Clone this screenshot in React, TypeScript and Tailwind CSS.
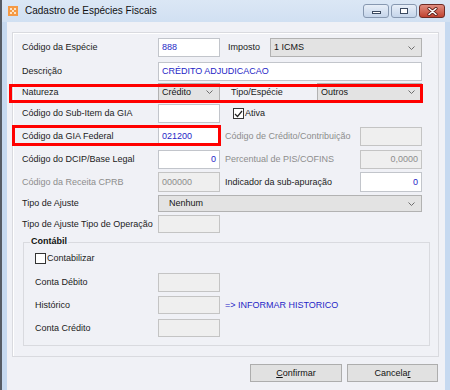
import React from "react"

// pequenos componentes do formulário
const Chevron = () => (
  <svg width="7" height="4" viewBox="0 0 7 4" className="shrink-0">
    <path d="M0.5 0.5 L3.5 3.5 L6.5 0.5" fill="none" stroke="#6d6d6d" strokeWidth="1" />
  </svg>
)

const Label = ({ children, off = false, w = "w-[136px]" }: { children: React.ReactNode; off?: boolean; w?: string }) => (
  <span className={`flex shrink-0 items-center whitespace-nowrap ${w} ${off ? "text-[#8d8d8d]" : "text-[#1b1b1b]"}`}>
    {children}
  </span>
)

const Input = ({ className = "", text = "", right = false, off = false }: { className?: string; text?: string; right?: boolean; off?: boolean }) => (
  <div
    className={`flex h-full shrink-0 items-center border px-[3px] ${
      off ? "border-[#c4c4c4] bg-[#efefef] text-[#8d8d8d]" : "border-[#c2c5cb] bg-white text-[#2626c6]"
    } ${right ? "justify-end" : ""} ${className}`}
  >
    {text}
  </div>
)

const Select = ({ className = "", text, pad = "pl-[3px]" }: { className?: string; text: string; pad?: string }) => (
  <div className={`flex h-full shrink-0 items-center justify-between border border-[#b2b2b2] bg-[#e3e3e3] pr-[6px] text-[#151515] ${pad} ${className}`}>
    <span>{text}</span>
    <Chevron />
  </div>
)

const Check = ({ checked = false }: { checked?: boolean }) => (
  <span className="flex h-[11px] w-[11px] shrink-0 items-center justify-center border border-[#333] bg-white">
    {checked && (
      <svg width="9" height="8" viewBox="0 0 9 8">
        <path d="M1 4 L3.5 6.5 L8 1" fill="none" stroke="#222" strokeWidth="1.2" />
      </svg>
    )}
  </span>
)

const WinButton = ({ kind }: { kind: "min" | "max" | "close" }) => (
  <div
    className={`flex h-[14px] w-[26px] items-center justify-center rounded-[3px] border ${
      kind === "close"
        ? "border-[#6e2b24] bg-gradient-to-b from-[#e08d80] to-[#c0412f]"
        : "border-[#8798b0] bg-gradient-to-b from-[#e8eff8] to-[#c5d5ea]"
    }`}
  >
    {kind === "min" && <span className="mt-[3px] h-[3px] w-[9px] border border-[#3b4a60] bg-white" />}
    {kind === "max" && <span className="h-[6px] w-[8px] border border-[#3b4a60] bg-white" />}
    {kind === "close" && (
      <svg width="11" height="9" viewBox="0 0 11 9">
        <path d="M2 1.5 L9 7.5 M9 1.5 L2 7.5" stroke="#5a1f18" strokeWidth="3.2" strokeLinecap="round" />
        <path d="M2 1.5 L9 7.5 M9 1.5 L2 7.5" stroke="#fff" strokeWidth="1.6" strokeLinecap="round" />
      </svg>
    )}
  </div>
)

const App = () => {
  return (
    <div className="flex h-[390px] w-[450px] flex-col overflow-hidden border-l-2 border-[#565c65] bg-[#c6d9f0] font-['Liberation_Sans',Arial,sans-serif] text-[9px] leading-none">
      {/* TITULO */}
      <div className="flex h-[22px] shrink-0 items-center bg-gradient-to-b from-[#dbe7f5] to-[#d1e0f2] pl-[6px] pr-[5px]">
        <svg width="10" height="10" viewBox="0 0 10 10" className="shrink-0">
          <rect width="10" height="10" fill="#f59a45" />
          <path d="M2 2h2v2h-2zM6 2h2v2h-2zM4 4h2v2h-2zM2 6h2v2h-2zM6 6h2v2h-2z" fill="#fde3c6" />
        </svg>
        <span className="ml-[7px] text-[10px] text-[#111]">Cadastro de Espécies Fiscais</span>
        <div className="ml-auto flex gap-[2px]">
          <WinButton kind="min" />
          <WinButton kind="max" />
          <WinButton kind="close" />
        </div>
      </div>

      {/* CORPO */}
      <div className="flex flex-1 px-[5px]">
        <div className="flex flex-1 flex-col bg-[#f0f1f6] pl-[5px] pr-[6px] pt-[10px]">
          {/* PAINEL */}
          <div className="relative border border-[#d9dadf] pb-[10px] pl-[9px] pr-[8px] pt-[5px] shadow-[inset_1px_1px_0_#ffffff]">
            <div className="flex h-[19px]">
              <Label>Código da Espécie</Label>
              <Input className="w-[62px]" text="888" />
              <Label w="ml-[8px] w-[42px]">Imposto</Label>
              <Select className="w-[152px]" text="1 ICMS" />
            </div>

            <div className="mt-[5px] flex h-[19px]">
              <Label>Descrição</Label>
              <Input className="w-[264px]" text="CRÉDITO ADJUDICACAO" />
            </div>

            <div className="mt-[2px] flex h-[18px]">
              <Label>Natureza</Label>
              <Select className="w-[62px]" text="Crédito" />
              <Label w="ml-[11px] w-[86px]">Tipo/Espécie</Label>
              <Select className="w-[105px]" text="Outros" />
            </div>

            <div className="mt-[3px] flex h-[19px]">
              <Label>Código do Sub-Item da GIA</Label>
              <Input className="w-[62px]" />
              <div className="ml-[13px] flex items-center gap-[1px] text-[#1b1b1b]">
                <Check checked />
                <span>Ativa</span>
              </div>
            </div>

            <div className="mt-[4px] flex h-[19px]">
              <Label>Código da GIA Federal</Label>
              <Input className="w-[62px]" text="021200" />
              <Label off w="ml-[5px] w-[135px]">Código de Crédito/Contribuição</Label>
              <Input off className="w-[62px]" />
            </div>

            <div className="mt-[4px] flex h-[19px]">
              <Label>Código do DCIP/Base Legal</Label>
              <Input className="w-[62px]" text="0" right />
              <Label off w="ml-[5px] w-[135px]">Percentual de PIS/COFINS</Label>
              <Input off className="w-[62px]" text="0,0000" right />
            </div>

            <div className="mt-[3px] flex h-[20px]">
              <Label off>Código da Receita CPRB</Label>
              <Input off className="w-[62px]" text="000000" />
              <Label w="ml-[5px] w-[135px]">Indicador da sub-apuração</Label>
              <Input className="w-[62px]" text="0" right />
            </div>

            <div className="mt-[3px] flex h-[17px]">
              <Label>Tipo de Ajuste</Label>
              <Select className="w-[264px]" text="Nenhum" pad="pl-[10px]" />
            </div>

            <div className="mt-[3px] flex h-[18px]">
              <Label>Tipo de Ajuste Tipo de Operação</Label>
              <Input off className="w-[62px]" />
            </div>

            {/* CONTABIL */}
            <div className="relative ml-[1px] mt-[9px] w-[407px] border border-[#d9dadf] pb-[8px] pl-[11px] pt-[10px]">
              <span className="absolute -top-[6px] left-[6px] bg-[#f0f1f6] px-[1px] font-bold text-[#111]">Contábil</span>
              <div className="flex h-[11px] items-center gap-[1px] text-[#1b1b1b]">
                <Check />
                <span>Contabilizar</span>
              </div>
              <div className="mt-[9px] flex h-[19px]">
                <Label w="w-[123px]">Conta Débito</Label>
                <Input off className="w-[62px]" />
              </div>
              <div className="mt-[4px] flex h-[18px]">
                <Label w="w-[123px]">Histórico</Label>
                <Input off className="w-[62px]" />
                <span className="ml-[5px] flex items-center text-[#2626c6]">=&gt; INFORMAR HISTORICO</span>
              </div>
              <div className="mt-[5px] flex h-[18px]">
                <Label w="w-[123px]">Conta Crédito</Label>
                <Input off className="w-[62px]" />
              </div>
            </div>

            {/* destaques em vermelho */}
            <div className="pointer-events-none absolute -left-[4px] top-[51px] h-[19px] w-[414px] border-[3px] border-[#ff0000]" />
            <div className="pointer-events-none absolute -left-[1px] top-[92px] h-[21px] w-[209px] border-[3px] border-[#ff0000]" />
          </div>

          {/* BOTOES */}
          <div className="mt-[7px] flex justify-end gap-[5px] pr-[1px]">
            <button className="h-[18px] w-[92px] border border-[#adadad] bg-[#e1e1e1] text-[#111]">
              <span className="underline">C</span>onfirmar
            </button>
            <button className="h-[18px] w-[91px] border border-[#adadad] bg-[#e1e1e1] text-[#111]">
              Cancela<span className="underline">r</span>
            </button>
          </div>
        </div>
      </div>
    </div>
  )
}

export default App
